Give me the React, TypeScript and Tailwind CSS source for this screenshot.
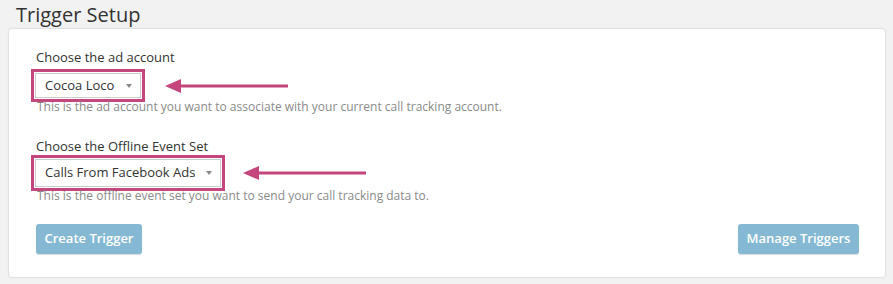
import React from "react";

function Arrow() {
  return (
    <svg width="124" height="16" viewBox="0 0 124 16" className="block">
      <line x1="12" y1="8" x2="123" y2="8" stroke="#c4467c" strokeWidth="3" />
      <polygon points="0,8 16,1 16,15" fill="#c4467c" />
    </svg>
  );
}

function Caret() {
  return (
    <svg width="6" height="4" viewBox="0 0 6 4" className="block">
      <polygon points="0,0 6,0 3,4" fill="#8a8a8a" />
    </svg>
  );
}

function Select({ label, width, height }: { label: string; width: string; height: string }) {
  return (
    <div className="border-[3px] border-[#c4467c] p-[1px]">
      <div
        className={`flex items-center justify-between border border-[#cccccc] bg-white pl-[9px] pr-[8px] ${width} ${height}`}
      >
        <span className="text-[13px] text-[#333333]">{label}</span>
        <Caret />
      </div>
    </div>
  );
}

export default function App() {
  return (
    <div
      className="min-h-[284px] w-[893px] bg-[#f2f2f2] text-[#333333]"
      style={{ fontFamily: '"Open Sans", "Liberation Sans", sans-serif' }}
    >
      <div className="pl-[16px] pt-[1px] text-[20px] leading-[27px]">Trigger Setup</div>
      <div className="ml-[9px] mt-[1px] h-[248px] w-[876px] rounded-[3px] bg-white px-[22px] pt-[19px] shadow-[0_0_2px_rgba(0,0,0,0.25)]">
        <div className="pl-[5px] text-[13px] leading-[19px]">Choose the ad account</div>
        <div className="mt-[2px] flex items-center gap-[20px]">
          <Select label="Cocoa Loco" width="w-[106px]" height="h-[25px]" />
          <Arrow />
        </div>
        <div className="-mt-[2px] pl-[6px] text-[12px] leading-[14px] text-[#8a8a8a]">
          This is the ad account you want to associate with your current call tracking account.
        </div>
        <div className="mt-[23px] pl-[5px] text-[13px] leading-[18px]">Choose the Offline Event Set</div>
        <div className="mt-0 flex items-center gap-[18px]">
          <Select label="Calls From Facebook Ads" width="w-[186px]" height="h-[28px]" />
          <Arrow />
        </div>
        <div className="-mt-[2px] pl-[6px] text-[12px] leading-[14px] text-[#8a8a8a]">
          This is the offline event set you want to send your call tracking data to.
        </div>
        <div className="mt-[21px] flex items-center justify-between pl-[5px] pr-[4px]">
          <button className="h-[30px] w-[106px] rounded-[3px] bg-[#85b9d3] text-[13px] font-semibold text-white shadow-[0_1px_1px_rgba(0,0,0,0.15)]">
            Create Trigger
          </button>
          <button className="h-[30px] w-[121px] rounded-[3px] bg-[#85b9d3] text-[13px] font-semibold text-white shadow-[0_1px_1px_rgba(0,0,0,0.15)]">
            Manage Triggers
          </button>
        </div>
      </div>
    </div>
  );
}
